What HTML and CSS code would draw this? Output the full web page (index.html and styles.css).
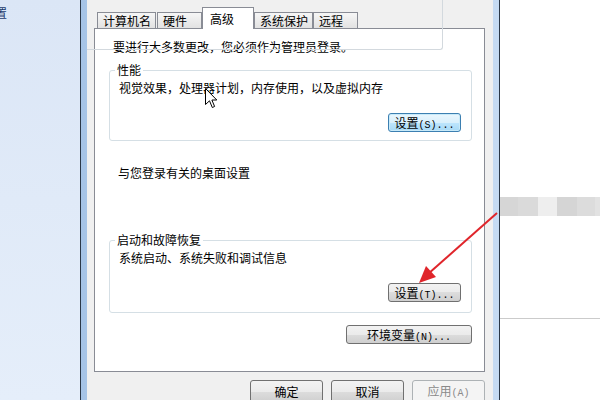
FILE: index.html
```html
<!DOCTYPE html>
<html lang="zh-CN">
<head>
  <meta charset="UTF-8">
  <title>系统属性 - 高级</title>
  <link rel="stylesheet" href="styles.css">
</head>
<body>
  <div class="sidebar">
    <div class="side-link">设置</div>
  </div>

  <div class="window">
    <div class="dialog">
      <div class="tabs">
        <div class="tab gap">计算机名</div>
        <div class="tab">硬件</div>
        <div class="tab active">高级</div>
        <div class="tab">系统保护</div>
        <div class="tab">远程</div>
      </div>

      <div class="panel">
        <div class="note">要进行大多数更改，您必须作为管理员登录。</div>

        <fieldset class="group first">
          <legend>性能</legend>
          <div class="group-text">视觉效果，处理器计划，内存使用，以及虚拟内存</div>
          <div class="group-actions">
            <button class="btn focus">设置<span class="key">(S)...</span></button>
          </div>
        </fieldset>

        <div class="plain">与您登录有关的桌面设置</div>

        <fieldset class="group second">
          <legend>启动和故障恢复</legend>
          <div class="group-text">系统启动、系统失败和调试信息</div>
          <div class="group-actions">
            <button class="btn">设置<span class="key">(T)...</span></button>
          </div>
        </fieldset>

        <div class="env-row">
          <button class="btn wide">环境变量<span class="key">(N)...</span></button>
        </div>
      </div>

      <div class="footer">
        <button class="btn big">确定</button>
        <button class="btn big">取消</button>
        <button class="btn big" disabled>应用<span class="key">(A)</span></button>
      </div>

      <!-- 截图里叠上来的分组框边线 -->
      <div class="ghost-line"></div>
    </div>
  </div>

  <div class="backdrop">
    <div class="blur-band">
      <span class="b1"></span><span class="b2"></span><span class="b3"></span><span class="b4"></span><span class="b5"></span><span class="b6"></span>
    </div>
    <div class="rule"></div>
  </div>

  <svg class="cursor" width="13" height="21" viewBox="0 0 13 21">
    <path d="M0.5 0.5 L0.5 16.5 L4.5 12.8 L7.3 19.5 L9.6 18.5 L6.9 12 L11.8 12 Z" fill="#fff" stroke="#000" stroke-width="1"/>
  </svg>

  <svg class="annot" width="600" height="400" viewBox="0 0 600 400">
    <line x1="497" y1="213" x2="428" y2="274" stroke="#e0252b" stroke-width="2"/>
    <polygon points="419,283 426,266 436,277" fill="#e0252b"/>
  </svg>
</body>
</html>
```

FILE: styles.css
```css
body {
  margin: 0;
  width: 600px;
  height: 400px;
  overflow: hidden;
  display: flex;
  position: relative;
  font-family: "Noto Sans CJK SC", sans-serif;
  font-size: 12px;
  color: #000;
  background: #fff;
}
.sidebar {
  width: 80px;
  background: linear-gradient(to bottom, #dbe6f6, #e5eefa);
  padding-top: 6px;
  overflow: hidden;
}
.side-link {
  line-height: 14px;
  color: #1d3a6c;
  text-indent: -17px;
  white-space: nowrap;
}
.window {
  width: 406px;
  display: flex;
  padding: 0 6px;
  border-left: 1px solid #2b3848;
  border-right: 1px solid #2b3848;
  background: linear-gradient(to right, #a6c4e7, #c6dbf3);
}
.dialog {
  flex: 1;
  position: relative;
  background: #f0f0f0;
  padding-top: 7px;
  border-top: 1px solid #c9d3dd;
  margin-top: -1px;
}
.tabs {
  display: flex;
  align-items: flex-end;
  margin-left: 10px;
}
.tab {
  box-sizing: border-box;
  height: 16px;
  min-width: 45px;
  padding: 0 4px 0 5px;
  line-height: 15px;
  border: 1px solid #898c95;
  border-bottom: none;
  background: linear-gradient(to bottom, #f6f6f6, #e2e2e2);
  white-space: nowrap;
}
.tab.gap {
  margin-right: 1px;
}
.tab.active {
  position: relative;
  z-index: 1;
  height: 22px;
  min-width: 52px;
  padding: 3px 4px 0 7px;
  margin-bottom: -1px;
  background: #fff;
}
.panel {
  box-sizing: border-box;
  height: 344px;
  margin: 0 8px 0 7px;
  padding-top: 11px;
  border: 1px solid #898c95;
  background: #fff;
}
.note {
  padding-left: 18px;
  line-height: 14px;
}
.group {
  margin: 9px 12px 0 14px;
  padding: 4px 10px 8px 9px;
  border: 1px solid #d5dfe5;
  border-radius: 3px;
}
.group legend {
  padding: 0 2px;
  margin-left: -4px;
  line-height: 14px;
}
.group.second {
  margin-top: 53px;
  padding-bottom: 10px;
}
.group-text {
  line-height: 14px;
}
.group-actions {
  display: flex;
  justify-content: flex-end;
  margin-top: 18px;
}
.plain {
  margin-top: 25px;
  padding-left: 23px;
  line-height: 14px;
}
.env-row {
  display: flex;
  justify-content: flex-end;
  margin: 12px 12px 0 0;
}
.btn {
  box-sizing: border-box;
  width: 73px;
  height: 19px;
  padding: 0;
  font-family: "Noto Sans CJK SC", sans-serif;
  font-size: 12px;
  line-height: 17px;
  color: #000;
  border: 1px solid #707070;
  border-radius: 3px;
  background: linear-gradient(to bottom, #f2f2f2 0%, #ebebeb 50%, #dddddd 50%, #cfcfcf 100%);
  white-space: nowrap;
}
.btn.focus {
  border-color: #3c7fb1;
  background: linear-gradient(to bottom, #eaf6fd 0%, #d9f0fc 50%, #bee6fd 50%, #a7d9f5 100%);
  box-shadow: inset 0 0 0 1px #c8eaf9;
}
.btn.wide {
  width: 126px;
}
.btn.big {
  height: 23px;
  line-height: 20px;
}
.btn:disabled {
  color: #8a8a8a;
  border-color: #adb2b5;
  background: #f4f4f4;
}
.key {
  font-family: "Liberation Mono", monospace;
  font-size: 10px;
}
.footer {
  display: flex;
  justify-content: flex-end;
  gap: 8px;
  margin-top: 8px;
  padding-right: 8px;
}
.ghost-line {
  position: absolute;
  left: 0;
  top: -10px;
  width: 356px;
  height: 60px;
  box-sizing: border-box;
  border-right: 1px solid #d3d9de;
  border-bottom: 1px solid #d3d9de;
  border-bottom-right-radius: 3px;
  pointer-events: none;
}
.backdrop {
  flex: 1;
  background: #fff;
}
.blur-band {
  display: flex;
  height: 19px;
  margin-top: 197px;
}
.blur-band span {
  display: block;
}
.b1 { width: 18px; background: #d6d6d6; }
.b2 { width: 20px; background: #dadada; }
.b3 { width: 19px; background: #eeeeee; }
.b4 { width: 20px; background: #d5d5d5; }
.b5 { width: 18px; background: #dcdcdc; }
.b6 { flex: 1; background: #e2e2e2; }
.rule {
  height: 1px;
  margin-top: 102px;
  background: #cbcbcb;
}
.cursor {
  position: absolute;
  left: 205px;
  top: 88px;
}
.annot {
  position: absolute;
  left: 0;
  top: 0;
  pointer-events: none;
}
```
